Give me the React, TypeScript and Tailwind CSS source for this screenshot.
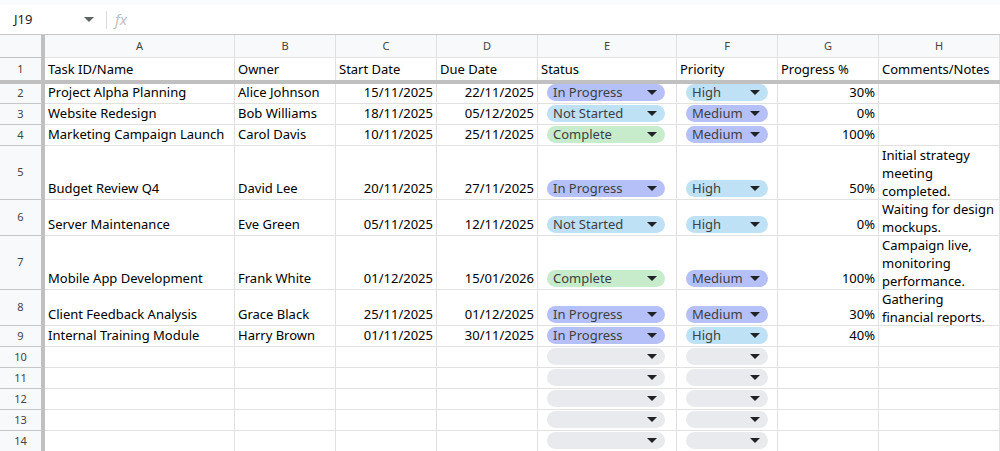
const cols = "grid-cols-[45px_190px_101px_101px_101px_139px_101px_101px_121px]";

type Row = {
  n: number;
  h: string;
  a?: string;
  b?: string;
  c?: string;
  d?: string;
  e?: string;
  f?: string;
  g?: string;
  note?: string;
};

const rows: Row[] = [
  { n: 2, h: "h-[20px]", a: "Project Alpha Planning", b: "Alice Johnson", c: "15/11/2025", d: "22/11/2025", e: "In Progress", f: "High", g: "30%" },
  { n: 3, h: "h-[21px]", a: "Website Redesign", b: "Bob Williams", c: "18/11/2025", d: "05/12/2025", e: "Not Started", f: "Medium", g: "0%" },
  { n: 4, h: "h-[21px]", a: "Marketing Campaign Launch", b: "Carol Davis", c: "10/11/2025", d: "25/11/2025", e: "Complete", f: "Medium", g: "100%" },
  { n: 5, h: "h-[54px]", a: "Budget Review Q4", b: "David Lee", c: "20/11/2025", d: "27/11/2025", e: "In Progress", f: "High", g: "50%", note: "Initial strategy meeting completed." },
  { n: 6, h: "h-[36px]", a: "Server Maintenance", b: "Eve Green", c: "05/11/2025", d: "12/11/2025", e: "Not Started", f: "High", g: "0%", note: "Waiting for design mockups." },
  { n: 7, h: "h-[54px]", a: "Mobile App Development", b: "Frank White", c: "01/12/2025", d: "15/01/2026", e: "Complete", f: "Medium", g: "100%", note: "Campaign live, monitoring performance." },
  { n: 8, h: "h-[36px]", a: "Client Feedback Analysis", b: "Grace Black", c: "25/11/2025", d: "01/12/2025", e: "In Progress", f: "Medium", g: "30%", note: "Gathering financial reports." },
  { n: 9, h: "h-[21px]", a: "Internal Training Module", b: "Harry Brown", c: "01/11/2025", d: "30/11/2025", e: "In Progress", f: "High", g: "40%" },
  { n: 10, h: "h-[21px]", e: "", f: "" },
  { n: 11, h: "h-[21px]", e: "", f: "" },
  { n: 12, h: "h-[21px]", e: "", f: "" },
  { n: 13, h: "h-[21px]", e: "", f: "" },
  { n: 14, h: "h-[21px]", e: "", f: "" },
];

function chipColor(v: string) {
  if (v === "In Progress" || v === "Medium") return "bg-[#b6c0f8]";
  if (v === "Not Started" || v === "High") return "bg-[#bfe1f6]";
  if (v === "Complete") return "bg-[#c6eccc]";
  return "bg-[#e8eaed]";
}

function Caret({ color = "#202124" }: { color?: string }) {
  return (
    <svg width="10" height="5" viewBox="0 0 10 5">
      <path d="M0 0h10L5 5z" fill={color} />
    </svg>
  );
}

function Chip({ value, width }: { value: string; width: string }) {
  return (
    <div className={`${width} ${chipColor(value)} ml-[9px] mb-[2px] flex h-[17px] items-center justify-between rounded-full pl-[6px] pr-[8px] text-[13px] text-[#3c4043]`}>
      <span>{value}</span>
      <Caret />
    </div>
  );
}

const cell = "border-r border-b border-[#e1e1e1] overflow-hidden";

export default function App() {
  return (
    <div className="h-[451px] w-[1000px] overflow-hidden bg-white text-[13px] text-black [font-family:'Liberation_Sans',Arial,sans-serif]">
      <div className="h-[5px] bg-[#f9fbfd]" />
      <div className="flex h-[30px] items-center border-b border-[#c7c7c7]">
        <div className="flex w-[98px] items-center justify-between pl-[14px] pr-[4px] text-[13px] text-[#202124]">
          <span>J19</span>
          <Caret color="#5f6368" />
        </div>
        <div className="mx-[8px] h-[18px] w-px bg-[#dadce0]" />
        <span className="[font-family:'Liberation_Serif',serif] italic text-[15px] text-[#c0c0c0]">fx</span>
      </div>
      <div className={`grid ${cols} h-[23px] text-[11px] text-[#444]`}>
        <div className="border-r-[4px] border-b border-[#c0c0c0] bg-[#f8f9fa]" />
        {["A", "B", "C", "D", "E", "F", "G", "H"].map((l) => (
          <div key={l} className={`${cell} border-[#c7c7c7] flex items-center justify-center bg-[#f8f9fa]`}>{l}</div>
        ))}
      </div>
      <div className={`grid ${cols} h-[26px] border-b-[4px] border-[#c0c0c0]`}>
        <div className="flex items-center justify-center border-r-[4px] border-[#c0c0c0] bg-[#f8f9fa] text-[11px] text-[#444]">1</div>
        {["Task ID/Name", "Owner", "Start Date", "Due Date", "Status", "Priority", "Progress %", "Comments/Notes"].map((t) => (
          <div key={t} className="flex items-center border-r border-[#e1e1e1] px-[3px] pt-[1px]">{t}</div>
        ))}
      </div>
      {rows.map((r) => (
        <div key={r.n} className={`grid ${cols} ${r.h}`}>
          <div className="flex items-center justify-center border-r-[4px] border-b border-[#c0c0c0] border-b-[#c7c7c7] bg-[#f8f9fa] text-[11px] text-[#444]">{r.n}</div>
          <div className={`${cell} flex items-end px-[3px] pb-[1px]`}>{r.a}</div>
          <div className={`${cell} flex items-end px-[3px] pb-[1px]`}>{r.b}</div>
          <div className={`${cell} flex items-end justify-end px-[3px] pb-[1px]`}>{r.c}</div>
          <div className={`${cell} flex items-end justify-end px-[3px] pb-[1px]`}>{r.d}</div>
          <div className={`${cell} flex items-end`}>{r.e !== undefined && <Chip value={r.e} width="w-[118px]" />}</div>
          <div className={`${cell} flex items-end`}>{r.f !== undefined && <Chip value={r.f} width="w-[82px]" />}</div>
          <div className={`${cell} flex items-end justify-end px-[3px] pb-[1px]`}>{r.g}</div>
          <div className={`${cell} px-[3px] leading-[18px]`}>{r.note}</div>
        </div>
      ))}
    </div>
  );
}
